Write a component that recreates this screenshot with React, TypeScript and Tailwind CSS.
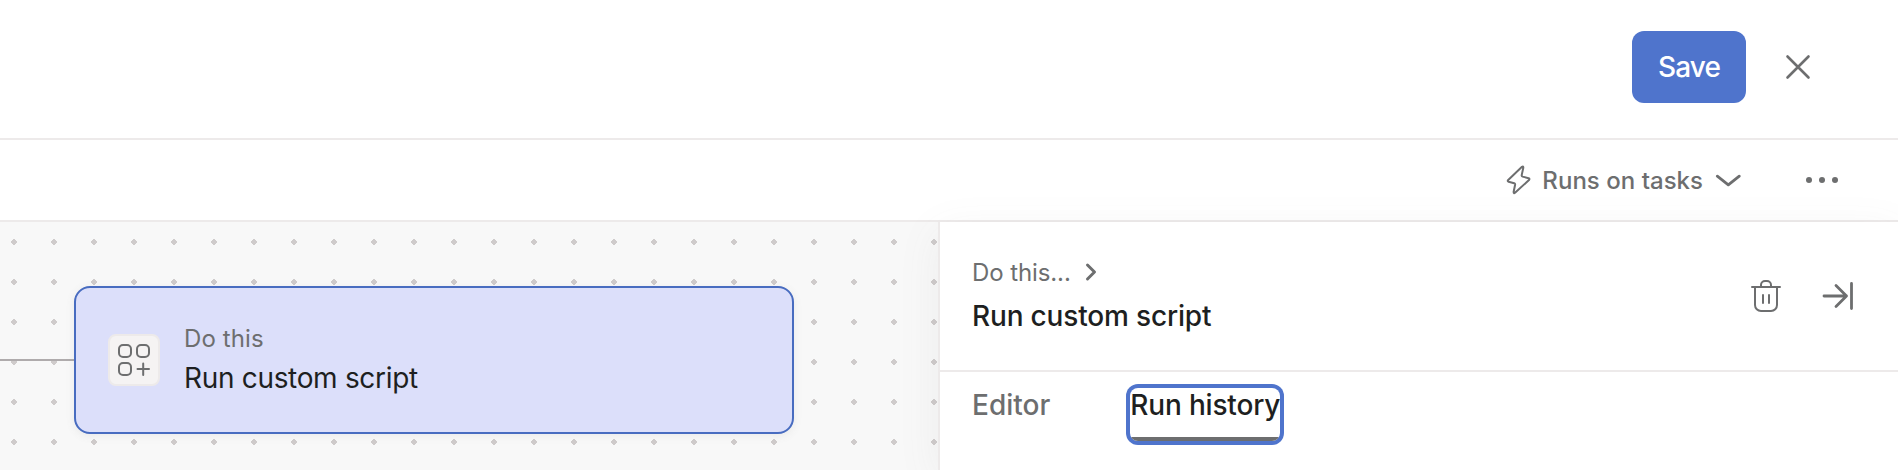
import type { ReactNode } from "react";

type IconProps = { className: string; width: number; height: number; stroke?: number; children: ReactNode };

function Icon({ className, width, height, stroke = 2, children }: IconProps) {
  return (
    <svg
      className={className}
      width={width}
      height={height}
      viewBox={`0 0 ${width} ${height}`}
      fill="none"
      stroke="currentColor"
      strokeWidth={stroke}
      strokeLinecap="round"
      strokeLinejoin="round"
      aria-hidden="true"
    >
      {children}
    </svg>
  );
}

function Header() {
  return (
    <header className="flex h-[140px] shrink-0 items-start justify-end border-b-2 border-[#edeaea] pr-[82px] pt-[31px]">
      <button className="h-[72px] w-[114px] rounded-xl bg-[#4f74cc] text-[28px] font-medium tracking-[-0.9px] text-white">
        Save
      </button>
      <button className="ml-[34px] flex h-[72px] w-9 items-center justify-center text-[#6d6e6f]" aria-label="Close">
        <Icon className="shrink-0" width={32} height={32} stroke={2.6}>
          <path d="M5.5 5.5l21 21M26.5 5.5l-21 21" />
        </Icon>
      </button>
    </header>
  );
}

function Toolbar() {
  return (
    <div className="flex h-[82px] shrink-0 items-center justify-end border-b-2 border-[#edeaea] pr-[56px] text-[#6d6e6f]">
      <button className="flex items-center text-2xl font-[550]">
        <Icon className="mr-[9px] shrink-0" width={28} height={32}>
          <path d="M17 2.8L3.2 15.900Q2.100 17.100 3.600 17.700L9.200 19.300Q10.300 19.700 10.100 20.800L8.600 28Q8.700 29.800 10 28.800L24 16Q25.100 14.800 23.600 14.200L17.600 12.600Q16.500 12.200 16.700 11.100L18.300 3.800Q18.400 1.800 17 2.800Z" />
        </Icon>
        <span className="pt-0.5 tracking-[0.03px]">Runs on tasks</span>
        <Icon className="ml-[9px] shrink-0" width={32} height={32} stroke={2.8}>
          <path d="M5.3 12.200l11 8.700 11-8.700" />
        </Icon>
      </button>
      <button className="ml-[58px] flex w-[40px] items-center justify-center gap-[7px]" aria-label="More actions">
        <span className="size-1.5 rounded-full bg-[#6d6e6f]" />
        <span className="size-1.5 rounded-full bg-[#6d6e6f]" />
        <span className="size-1.5 rounded-full bg-[#6d6e6f]" />
      </button>
    </div>
  );
}

function Canvas() {
  return (
    <section className="flex w-[938px] shrink-0 items-start bg-[#f8f8f8] bg-[radial-gradient(circle,#cfcbcb_2.7px,transparent_2.7px)] bg-[length:40px_40px] bg-[position:-6px_0] pt-16">
      <div className="mt-[73px] h-0.5 w-[74px] bg-[#afabac]" />
      <article className="flex h-[148px] w-[720px] items-center rounded-2xl border-2 border-[#486cc0] bg-[#dcdffa] pl-8 shadow-[0_2px_8px_rgba(109,110,111,0.1)]">
        <div className="flex size-[52px] items-center justify-center rounded-lg border-2 border-[#edeaea] bg-[#f5f3f3] text-[#6d6e6f]">
          <Icon className="shrink-0" width={32} height={32}>
            <rect x="1" y="1" width="12" height="12" rx="4" />
            <rect x="19" y="1" width="12" height="12" rx="4" />
            <rect x="1" y="19" width="12" height="12" rx="4" />
            <path d="M19.500 25h11.500M25.200 19.500v11.500" />
          </Icon>
        </div>
        <div className="ml-6">
          <p className="pt-0.5 text-2xl leading-[34px] tracking-[0.1px] text-[#6d6e6f]">Do this</p>
          <h2 className="text-[28px] leading-[44px] tracking-[-0.32px] text-[#1e1f21]">Run custom script</h2>
        </div>
      </article>
    </section>
  );
}

function SidePanel() {
  return (
    <aside className="relative w-[960px] shrink-0 border-l-2 border-[#edeaea] bg-white shadow-[0_10px_40px_rgba(109,110,111,0.08)]">
      <div className="flex h-[150px] items-center justify-between border-b-2 border-[#edeaea] pl-8 pr-11">
        <div>
          <p className="flex items-center pt-0.5 text-2xl leading-[38px] tracking-[-0.1px] text-[#6d6e6f]">
            Do this...
            <Icon className="ml-3 -mt-0.5" width={16} height={24} stroke={3}>
              <path d="M4.500 5l7 7-7 7" />
            </Icon>
          </p>
          <h2 className="text-[28px] font-medium leading-[48px] tracking-[-0.17px] text-[#1e1f21]">Run custom script</h2>
        </div>
        <div className="flex items-center gap-10 text-[#6d6e6f]">
          <button aria-label="Delete">
            <Icon className="block" width={32} height={32}>
              <path d="M2 7h28M11 6.500V5a4 4 0 0 1 4-4h2a4 4 0 0 1 4 4v1.500M5 7v18a6 6 0 0 0 6 6h10a6 6 0 0 0 6-6V7M13 15v8M19 15v8" />
            </Icon>
          </button>
          <button aria-label="Collapse panel">
            <Icon className="block" width={32} height={32} stroke={2.8}>
              <path d="M2 16H24.500M14 5.500L24.500 16 14 26.500M29.500 3.500v25" />
            </Icon>
          </button>
        </div>
      </div>
      <nav className="flex items-start gap-20 pl-8 pt-4 text-[28px] font-medium leading-[34px]">
        <button className="text-[#6d6e6f]">Editor</button>
        <button className="flex h-[53px] w-[150px] flex-col justify-between overflow-hidden whitespace-nowrap rounded-lg tracking-[-0.17px] text-[#1e1f21] ring-4 ring-[#4f74cc]">
          Run history
          <span className="h-1 w-full bg-[#6d6e6f]" />
        </button>
      </nav>
    </aside>
  );
}

export default function App() {
  return (
    <div className="flex h-[470px] w-[1898px] flex-col overflow-hidden bg-white font-['Inter',sans-serif]">
      <Header />
      <Toolbar />
      <main className="flex min-h-0 flex-1">
        <Canvas />
        <SidePanel />
      </main>
    </div>
  );
}
